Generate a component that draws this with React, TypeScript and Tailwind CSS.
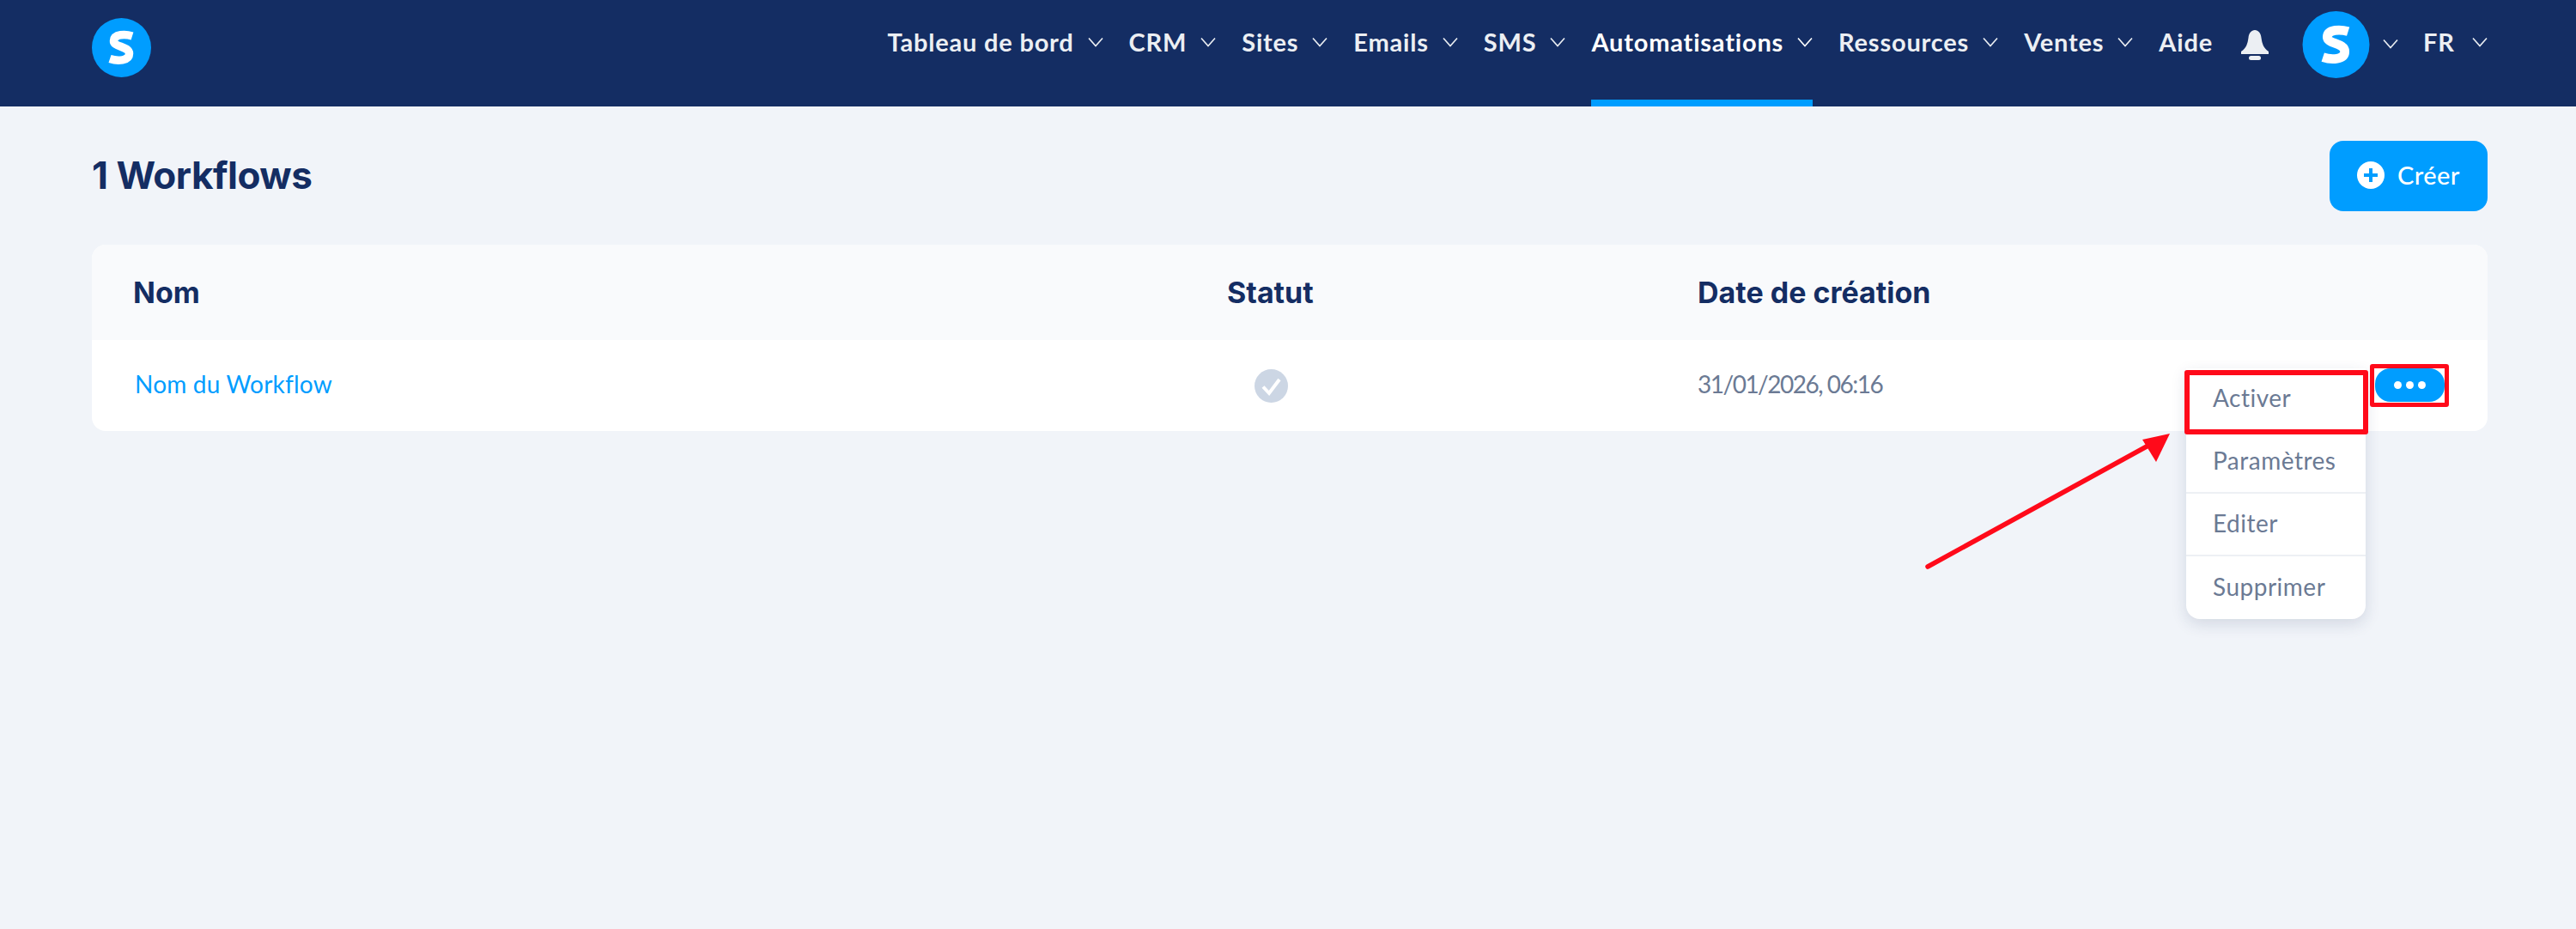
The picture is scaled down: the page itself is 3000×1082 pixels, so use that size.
import React from 'react';

const navItems = [
  { label: 'Tableau de bord', chevron: true },
  { label: 'CRM', chevron: true },
  { label: 'Sites', chevron: true },
  { label: 'Emails', chevron: true },
  { label: 'SMS', chevron: true },
  { label: 'Automatisations', chevron: true, active: true },
  { label: 'Ressources', chevron: true },
  { label: 'Ventes', chevron: true },
  { label: 'Aide', chevron: false },
];

const menuItems = ['Activer', 'Paramètres', 'Editer', 'Supprimer'];

const Chevron = () => (
  <svg viewBox="0 0 18 12" className="h-3 w-[18px]" fill="none" stroke="currentColor" strokeWidth="1.6">
    <path d="M1 1.5 9 10.5 17 1.5" />
  </svg>
);

const Logo = ({ className }: { className: string }) => (
  <svg viewBox="0 0 69 69" className={className}>
    <circle cx="34.5" cy="34.5" r="34.5" fill="#009dff" />
    <path
      d="M47 21C39 18.500 26 18.500 25.500 26.500 25 34 43.500 32.500 43.500 41.500 43.500 50 30 50.500 21 47.500"
      fill="none"
      stroke="#fff"
      strokeWidth="9.500"
    />
  </svg>
);

const Bell = () => (
  <svg viewBox="0 0 32 35" className="h-[35px] w-8" fill="#eceff3">
    <path d="M16 0C20 0 23 3.500 23.500 9 24.500 16 26 21 32 25V28H0V25C6 21 7.500 16 8.500 9 9 3.500 12 0 16 0Z" />
    <rect x="9" y="30" width="14" height="5" rx="2.500" />
  </svg>
);

export default function App() {
  return (
    <div className="relative min-h-[1082px] w-full overflow-hidden bg-[#f1f4f9] [font-family:Lato,sans-serif]">
      {/* Top bar */}
      <header className="flex h-[124px] items-start justify-between bg-[#142d63] pl-[107px] pr-[103px]">
        <Logo className="mt-[21px] h-[69px] w-[69px]" />
        <div className="flex items-start">
          <nav className="flex items-start gap-[30px]">
            {navItems.map((item) => (
              <a
                key={item.label}
                className={`relative flex h-[124px] items-center gap-4 pb-[26px] text-[29px] font-bold tracking-[0.8px] ${
                  item.active ? 'text-white' : 'text-[#eceff3]'
                }`}
              >
                {item.label}
                {item.chevron && <Chevron />}
                {item.active && <span className="absolute bottom-0 left-0 h-2 w-full bg-[#009dff]" />}
              </a>
            ))}
          </nav>
          <div className="ml-[33px] mt-[35px]">
            <Bell />
          </div>
          <Logo className="ml-[39px] mt-[13px] h-[78px] w-[79px]" />
          <span className="ml-[15px] mt-[45px] text-[#eceff3]">
            <Chevron />
          </span>
          <span className="ml-[29px] flex h-[98px] items-center gap-5 text-[29px] font-bold tracking-[1px] text-[#eceff3]">
            FR
            <Chevron />
          </span>
        </div>
      </header>

      <main className="pl-[107px] pr-[103px]">
        {/* Title row */}
        <div className="flex h-[161px] items-center justify-between">
          <h1 className="pb-[2px] text-[44px] font-bold tracking-[-0.5px] text-[#142d63] [font-family:Inter,sans-serif]">1 Workflows</h1>
          <button className="flex h-[82px] w-[184px] items-center gap-[15px] rounded-2xl bg-[#009dff] pb-[1px] pl-8 text-[29px] font-medium tracking-[0.4px] text-white">
            <svg viewBox="0 0 32 32" className="h-8 w-8">
              <circle cx="16" cy="16" r="16" fill="#fff" />
              <path d="M16 8V24M8 16H24" stroke="#009dff" strokeWidth="4" />
            </svg>
            Créer
          </button>
        </div>

        {/* Table */}
        <section className="overflow-hidden rounded-2xl bg-white">
          <div className="flex h-[111px] items-center bg-[#f9fafc] pl-[48px] text-[34px] font-bold text-[#142d63] [font-family:Inter,sans-serif]">
            <div className="w-[1274px]">Nom</div>
            <div className="w-[548px]">Statut</div>
            <div>Date de création</div>
          </div>
          <div className="flex h-[106px] items-center pl-[50px] text-[28px]">
            <a className="w-[1304px] pb-1 tracking-[0.2px] text-[#009dff]">Nom du Workflow</a>
            <div className="w-[516px]">
              <svg viewBox="0 0 39 39" className="h-[39px] w-[39px]">
                <circle cx="19.500" cy="19.500" r="19.500" fill="#ccd6e4" />
                <path d="M10 20.500 17 28 29 12" fill="none" stroke="#fff" strokeWidth="4" />
              </svg>
            </div>
            <div className="pb-1 tracking-[-1.5px] text-[#6b7a94]">31/01/2026, 06:16</div>
          </div>
        </section>
      </main>

      {/* Row actions button */}
      <button className="absolute left-[2766px] top-[429px] flex h-[39px] w-[81px] items-center justify-center gap-[5px] rounded-[18px] bg-[#009dff]">
        <span className="h-[9px] w-[9px] rounded-full bg-white" />
        <span className="h-[9px] w-[9px] rounded-full bg-white" />
        <span className="h-[9px] w-[9px] rounded-full bg-white" />
      </button>

      {/* Dropdown */}
      <ul className="absolute left-[2546px] top-[429px] w-[209px] divide-y-2 divide-[#edf0f4] rounded-b-2xl bg-white text-[28px] tracking-[0.5px] text-[#6b7a94] shadow-[0_6px_18px_rgba(30,50,90,0.14)]">
        {menuItems.map((item) => (
          <li key={item} className="flex h-[73px] items-center pb-[4px] pl-[31px]">
            {item}
          </li>
        ))}
      </ul>

      {/* Annotations */}
      <div className="absolute left-[2544px] top-[431px] h-[75px] w-[214px] rounded-[3px] border-[6px] border-[#ff0a1a]" />
      <div className="absolute left-[2760px] top-[424px] h-[50px] w-[92px] rounded-[3px] border-[5px] border-[#ff0a1a]" />
      <svg className="absolute left-[2230px] top-[495px] h-[175px] w-[310px]" viewBox="0 0 310 175">
        <path d="M15 165 270 25" stroke="#ff0a1a" strokeWidth="5.500" strokeLinecap="round" />
        <path d="M297 10 265 17 281 43Z" fill="#ff0a1a" />
      </svg>
    </div>
  );
}
